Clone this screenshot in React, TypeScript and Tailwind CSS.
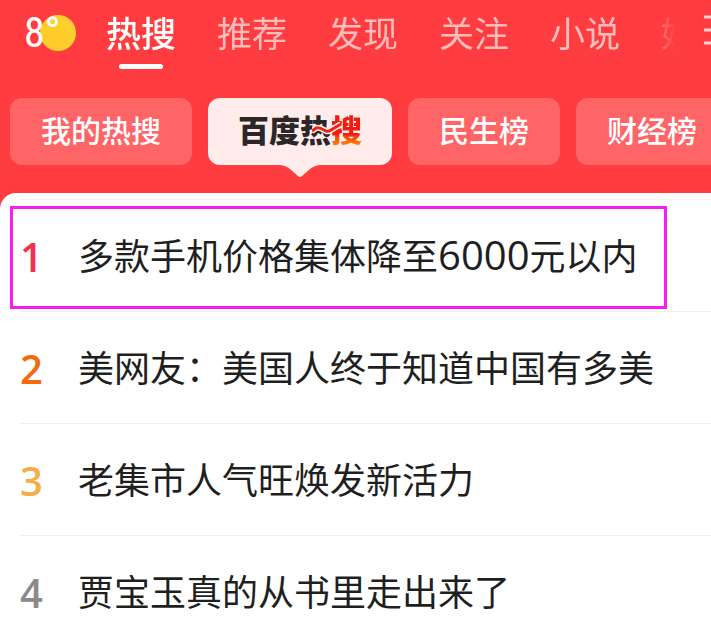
import { clsx } from 'clsx';

interface HotItem {
  rank: number;
  title: string;
  color: string;
  marked?: boolean;
}

const channels = ['热搜', '推荐', '发现', '关注', '小说', '娱乐'];

const boards = ['我的热搜', '百度热搜', '民生榜', '财经榜'];

const hotList: HotItem[] = [
  { rank: 1, title: '多款手机价格集体降至6000元以内', color: 'text-[#f4304f]', marked: true },
  { rank: 2, title: '美网友：美国人终于知道中国有多美', color: 'text-[#f76a0c]' },
  { rank: 3, title: '老集市人气旺焕发新活力', color: 'text-[#f5ae45]' },
  { rank: 4, title: '贾宝玉真的从书里走出来了', color: 'text-[#8a8a8a]' },
];

/** Current temperature over the sun */
function Weather() {
  return (
    <div className="relative w-[106px] shrink-0">
      <svg className="absolute top-[15px] left-10 size-9" viewBox="0 0 36 36" aria-hidden="true">
        <defs>
          <radialGradient id="sun" cx="0.4" cy="0.65" r="0.7">
            <stop offset="0" stopColor="#ffc928" />
            <stop offset="1" stopColor="#fcd22f" />
          </radialGradient>
        </defs>
        <circle cx="18" cy="18" r="18" fill="url(#sun)" />
      </svg>
      <span className="relative ml-6 font-['Roboto_Condensed','Liberation_Sans_Narrow','Liberation_Sans',sans-serif] text-[42px] leading-[66px] text-white">
        8°
      </span>
    </div>
  );
}

/** Top channel bar */
function ChannelBar() {
  return (
    <div className="flex h-[70px]">
      <Weather />
      <nav className="flex min-w-0 flex-1 gap-[41px] overflow-hidden [mask-image:linear-gradient(to_right,#000_calc(100%-40px),transparent_calc(100%-5px))]">
        {channels.map((name, i) => (
          <a
            key={name}
            href={`#${name}`}
            className={clsx(
              'flex shrink-0 flex-col items-center text-[35px] leading-[64px]',
              i === 0 ? 'font-medium text-white' : 'text-[#ffbcbb]'
            )}
          >
            {name}
            {i === 0 && <span className="h-[5px] w-11 rounded-full bg-white" />}
          </a>
        ))}
      </nav>
      <button type="button" aria-label="菜单" className="h-[60px] w-[30px] shrink-0 overflow-hidden pl-[23px]">
        <svg className="h-8 w-8" viewBox="0 0 32 32" fill="none" stroke="#ffd0cf" strokeWidth="3">
          <path d="M0 3h30M0 16h30M0 29h30" />
        </svg>
      </button>
    </div>
  );
}

/** Wordmark of the selected board */
function HotLogo() {
  return (
    <span className="relative flex text-[31px] font-black text-[#2b2627]">
      百度热
      <span className="bg-linear-to-b from-[#f01c10] from-60% to-[#ff8a00] to-85% bg-clip-text text-transparent">搜</span>
      <svg className="absolute top-1/2 left-[74px] -mt-2 h-4 w-8" viewBox="0 0 32 16" fill="none" aria-hidden="true">
        <path d="M0 9l4-3q3-1 6 1l4 2q2 1 5-1l10-6" stroke="#ffeceb" strokeWidth="6" />
        <path d="M0 9l4-3q3-1 6 1l4 2q2 1 5-1l10-6" stroke="#ee2416" strokeWidth="3" />
      </svg>
    </span>
  );
}

function BoardTabs() {
  return (
    <div className="mt-7 flex gap-4 overflow-hidden pb-7 pl-[10px]">
      {boards.map((name) => {
        const active = name === '百度热搜';
        return (
          <button
            key={name}
            type="button"
            aria-pressed={active}
            className={clsx(
              'relative flex h-[67px] shrink-0 items-center justify-center rounded-xl pb-1 text-[30px] font-medium text-white',
              active ? 'bg-[#ffeceb] px-[30px]' : 'bg-[#ff6466] px-[31px]'
            )}
          >
            {active ? <HotLogo /> : name}
            {active && (
              <svg className="absolute top-full left-1/2 -mt-px h-[13px] w-11 -translate-x-1/2" viewBox="0 0 44 13" aria-hidden="true">
                <path d="M0 0h44v1c-6 0-9 2-12 4l-8 7q-2 2-4 0l-8-7C9 3 6 1 0 1z" fill="#ffeceb" />
              </svg>
            )}
          </button>
        );
      })}
    </div>
  );
}

function HotRow({ item }: { item: HotItem }) {
  // digits in a title are set a little larger than the characters
  const parts = item.title.split(/(\d+)/);

  return (
    <li className="relative ml-5 border-t border-[#f0f0f0]">
      <a href={`#hot-${item.rank}`} className="flex h-[111px] items-center pb-1">
        <span className={clsx("w-[58px] shrink-0 pt-1.5 font-['Open_Sans','Noto_Sans',sans-serif] text-[40px] font-semibold", item.color)}>
          {item.rank}
        </span>
        <span className="text-[36px] whitespace-nowrap text-[#1f1f1f]">
          {parts.map((part, i) =>
            /^\d+$/.test(part) ? (
              <span key={i} className="font-['Open_Sans','Noto_Sans',sans-serif] text-[40px] leading-none">{part}</span>
            ) : (
              part
            )
          )}
        </span>
      </a>
      {item.marked && (
        <div className="pointer-events-none absolute top-1.5 right-11 bottom-0.5 -left-[10px] border-3 border-[#f81cf4]" />
      )}
    </li>
  );
}

export default function App() {
  return (
    <div className="min-h-screen overflow-hidden bg-white font-['Noto_Sans_CJK_SC',sans-serif]">
      <header className="bg-[#ff3d41]">
        <ChannelBar />
        <BoardTabs />
      </header>
      <main className="bg-[#ff3d41]">
        <ol className="rounded-tl-2xl bg-white pt-1.5">
          {hotList.map((item) => (
            <HotRow key={item.rank} item={item} />
          ))}
        </ol>
      </main>
    </div>
  );
}
